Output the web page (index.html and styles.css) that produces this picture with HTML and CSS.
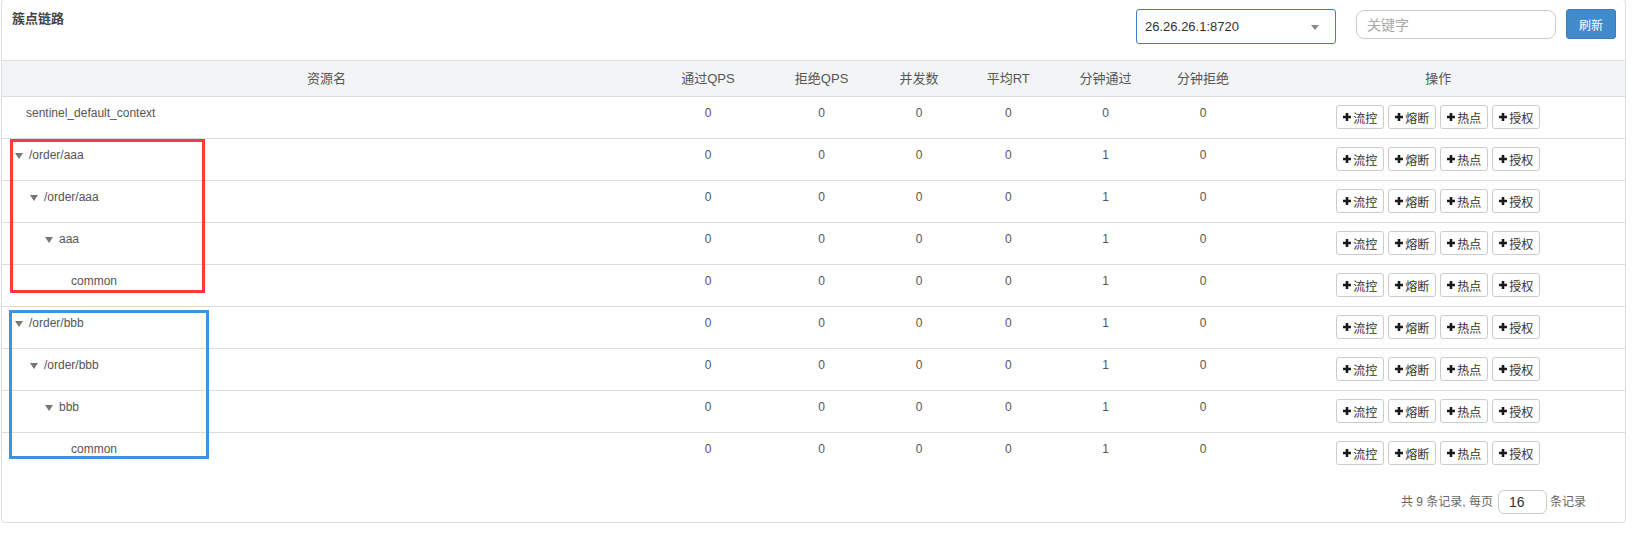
FILE: index.html
```html
<!DOCTYPE html>
<html lang="zh-CN">
<head>
<meta charset="utf-8">
<title>簇点链路</title>
<link rel="stylesheet" href="styles.css">
</head>
<body>
<div class="panel">
  <div class="heading">
    <div class="title">簇点链路</div>
    <div class="tools">
      <div class="select"><span>26.26.26.1:8720</span><i class="caret"></i></div>
      <input class="search" type="text" placeholder="关键字">
      <button class="btn-primary" type="button">刷新</button>
    </div>
  </div>

  <div class="table">
    <div class="row head">
      <div class="c">资源名</div><div class="c">通过QPS</div><div class="c">拒绝QPS</div><div class="c">并发数</div><div class="c">平均RT</div><div class="c">分钟通过</div><div class="c">分钟拒绝</div><div class="c">操作</div>
    </div>

    <div class="row">
      <div class="c name lv0"><span class="leaf">sentinel_default_context</span></div>
      <div class="c">0</div><div class="c">0</div><div class="c">0</div><div class="c">0</div><div class="c">0</div><div class="c">0</div>
      <div class="c ops"><button class="btn"><svg viewBox="0 0 10 10"><path d="M3.4 0h3.2v3.4H10v3.2H6.6V10H3.4V6.6H0V3.4h3.4z"/></svg>流控</button><button class="btn"><svg viewBox="0 0 10 10"><path d="M3.4 0h3.2v3.4H10v3.2H6.6V10H3.4V6.6H0V3.4h3.4z"/></svg>熔断</button><button class="btn"><svg viewBox="0 0 10 10"><path d="M3.4 0h3.2v3.4H10v3.2H6.6V10H3.4V6.6H0V3.4h3.4z"/></svg>热点</button><button class="btn"><svg viewBox="0 0 10 10"><path d="M3.4 0h3.2v3.4H10v3.2H6.6V10H3.4V6.6H0V3.4h3.4z"/></svg>授权</button></div>
    </div>

    <div class="row">
      <div class="c name lv0"><i class="tri"></i>/order/aaa</div>
      <div class="c">0</div><div class="c">0</div><div class="c">0</div><div class="c">0</div><div class="c">1</div><div class="c">0</div>
      <div class="c ops"><button class="btn"><svg viewBox="0 0 10 10"><path d="M3.4 0h3.2v3.4H10v3.2H6.6V10H3.4V6.6H0V3.4h3.4z"/></svg>流控</button><button class="btn"><svg viewBox="0 0 10 10"><path d="M3.4 0h3.2v3.4H10v3.2H6.6V10H3.4V6.6H0V3.4h3.4z"/></svg>熔断</button><button class="btn"><svg viewBox="0 0 10 10"><path d="M3.4 0h3.2v3.4H10v3.2H6.6V10H3.4V6.6H0V3.4h3.4z"/></svg>热点</button><button class="btn"><svg viewBox="0 0 10 10"><path d="M3.4 0h3.2v3.4H10v3.2H6.6V10H3.4V6.6H0V3.4h3.4z"/></svg>授权</button></div>
    </div>

    <div class="row">
      <div class="c name lv1"><i class="tri"></i>/order/aaa</div>
      <div class="c">0</div><div class="c">0</div><div class="c">0</div><div class="c">0</div><div class="c">1</div><div class="c">0</div>
      <div class="c ops"><button class="btn"><svg viewBox="0 0 10 10"><path d="M3.4 0h3.2v3.4H10v3.2H6.6V10H3.4V6.6H0V3.4h3.4z"/></svg>流控</button><button class="btn"><svg viewBox="0 0 10 10"><path d="M3.4 0h3.2v3.4H10v3.2H6.6V10H3.4V6.6H0V3.4h3.4z"/></svg>熔断</button><button class="btn"><svg viewBox="0 0 10 10"><path d="M3.4 0h3.2v3.4H10v3.2H6.6V10H3.4V6.6H0V3.4h3.4z"/></svg>热点</button><button class="btn"><svg viewBox="0 0 10 10"><path d="M3.4 0h3.2v3.4H10v3.2H6.6V10H3.4V6.6H0V3.4h3.4z"/></svg>授权</button></div>
    </div>

    <div class="row">
      <div class="c name lv2"><i class="tri"></i>aaa</div>
      <div class="c">0</div><div class="c">0</div><div class="c">0</div><div class="c">0</div><div class="c">1</div><div class="c">0</div>
      <div class="c ops"><button class="btn"><svg viewBox="0 0 10 10"><path d="M3.4 0h3.2v3.4H10v3.2H6.6V10H3.4V6.6H0V3.4h3.4z"/></svg>流控</button><button class="btn"><svg viewBox="0 0 10 10"><path d="M3.4 0h3.2v3.4H10v3.2H6.6V10H3.4V6.6H0V3.4h3.4z"/></svg>熔断</button><button class="btn"><svg viewBox="0 0 10 10"><path d="M3.4 0h3.2v3.4H10v3.2H6.6V10H3.4V6.6H0V3.4h3.4z"/></svg>热点</button><button class="btn"><svg viewBox="0 0 10 10"><path d="M3.4 0h3.2v3.4H10v3.2H6.6V10H3.4V6.6H0V3.4h3.4z"/></svg>授权</button></div>
    </div>

    <div class="row">
      <div class="c name lv3"><span class="leaf">common</span></div>
      <div class="c">0</div><div class="c">0</div><div class="c">0</div><div class="c">0</div><div class="c">1</div><div class="c">0</div>
      <div class="c ops"><button class="btn"><svg viewBox="0 0 10 10"><path d="M3.4 0h3.2v3.4H10v3.2H6.6V10H3.4V6.6H0V3.4h3.4z"/></svg>流控</button><button class="btn"><svg viewBox="0 0 10 10"><path d="M3.4 0h3.2v3.4H10v3.2H6.6V10H3.4V6.6H0V3.4h3.4z"/></svg>熔断</button><button class="btn"><svg viewBox="0 0 10 10"><path d="M3.4 0h3.2v3.4H10v3.2H6.6V10H3.4V6.6H0V3.4h3.4z"/></svg>热点</button><button class="btn"><svg viewBox="0 0 10 10"><path d="M3.4 0h3.2v3.4H10v3.2H6.6V10H3.4V6.6H0V3.4h3.4z"/></svg>授权</button></div>
    </div>

    <div class="row">
      <div class="c name lv0"><i class="tri"></i>/order/bbb</div>
      <div class="c">0</div><div class="c">0</div><div class="c">0</div><div class="c">0</div><div class="c">1</div><div class="c">0</div>
      <div class="c ops"><button class="btn"><svg viewBox="0 0 10 10"><path d="M3.4 0h3.2v3.4H10v3.2H6.6V10H3.4V6.6H0V3.4h3.4z"/></svg>流控</button><button class="btn"><svg viewBox="0 0 10 10"><path d="M3.4 0h3.2v3.4H10v3.2H6.6V10H3.4V6.6H0V3.4h3.4z"/></svg>熔断</button><button class="btn"><svg viewBox="0 0 10 10"><path d="M3.4 0h3.2v3.4H10v3.2H6.6V10H3.4V6.6H0V3.4h3.4z"/></svg>热点</button><button class="btn"><svg viewBox="0 0 10 10"><path d="M3.4 0h3.2v3.4H10v3.2H6.6V10H3.4V6.6H0V3.4h3.4z"/></svg>授权</button></div>
    </div>

    <div class="row">
      <div class="c name lv1"><i class="tri"></i>/order/bbb</div>
      <div class="c">0</div><div class="c">0</div><div class="c">0</div><div class="c">0</div><div class="c">1</div><div class="c">0</div>
      <div class="c ops"><button class="btn"><svg viewBox="0 0 10 10"><path d="M3.4 0h3.2v3.4H10v3.2H6.6V10H3.4V6.6H0V3.4h3.4z"/></svg>流控</button><button class="btn"><svg viewBox="0 0 10 10"><path d="M3.4 0h3.2v3.4H10v3.2H6.6V10H3.4V6.6H0V3.4h3.4z"/></svg>熔断</button><button class="btn"><svg viewBox="0 0 10 10"><path d="M3.4 0h3.2v3.4H10v3.2H6.6V10H3.4V6.6H0V3.4h3.4z"/></svg>热点</button><button class="btn"><svg viewBox="0 0 10 10"><path d="M3.4 0h3.2v3.4H10v3.2H6.6V10H3.4V6.6H0V3.4h3.4z"/></svg>授权</button></div>
    </div>

    <div class="row">
      <div class="c name lv2"><i class="tri"></i>bbb</div>
      <div class="c">0</div><div class="c">0</div><div class="c">0</div><div class="c">0</div><div class="c">1</div><div class="c">0</div>
      <div class="c ops"><button class="btn"><svg viewBox="0 0 10 10"><path d="M3.4 0h3.2v3.4H10v3.2H6.6V10H3.4V6.6H0V3.4h3.4z"/></svg>流控</button><button class="btn"><svg viewBox="0 0 10 10"><path d="M3.4 0h3.2v3.4H10v3.2H6.6V10H3.4V6.6H0V3.4h3.4z"/></svg>熔断</button><button class="btn"><svg viewBox="0 0 10 10"><path d="M3.4 0h3.2v3.4H10v3.2H6.6V10H3.4V6.6H0V3.4h3.4z"/></svg>热点</button><button class="btn"><svg viewBox="0 0 10 10"><path d="M3.4 0h3.2v3.4H10v3.2H6.6V10H3.4V6.6H0V3.4h3.4z"/></svg>授权</button></div>
    </div>

    <div class="row">
      <div class="c name lv3"><span class="leaf">common</span></div>
      <div class="c">0</div><div class="c">0</div><div class="c">0</div><div class="c">0</div><div class="c">1</div><div class="c">0</div>
      <div class="c ops"><button class="btn"><svg viewBox="0 0 10 10"><path d="M3.4 0h3.2v3.4H10v3.2H6.6V10H3.4V6.6H0V3.4h3.4z"/></svg>流控</button><button class="btn"><svg viewBox="0 0 10 10"><path d="M3.4 0h3.2v3.4H10v3.2H6.6V10H3.4V6.6H0V3.4h3.4z"/></svg>熔断</button><button class="btn"><svg viewBox="0 0 10 10"><path d="M3.4 0h3.2v3.4H10v3.2H6.6V10H3.4V6.6H0V3.4h3.4z"/></svg>热点</button><button class="btn"><svg viewBox="0 0 10 10"><path d="M3.4 0h3.2v3.4H10v3.2H6.6V10H3.4V6.6H0V3.4h3.4z"/></svg>授权</button></div>
    </div>
  </div>

  <div class="footer">
    <span class="ftext">共 9 条记录, 每页</span>
    <input class="page-size" type="text" value="16">
    <span class="ftext">条记录</span>
  </div>
</div>

<div class="mark mark-red"></div>
<div class="mark mark-blue"></div>
</body>
</html>
```

FILE: styles.css
```css
* { box-sizing: border-box; }

html, body {
  margin: 0;
  padding: 0;
  background: #fff;
}

body {
  font-family: "Liberation Sans", "Noto Sans CJK SC", sans-serif;
  font-size: 12px;
  color: #555;
  position: relative;
  height: 536px;
  overflow: hidden;
}

.panel {
  margin: -1px 0 0 1px;
  width: 1625px;
  border: 1px solid #ddd;
  border-radius: 4px;
  background: #fff;
}

.heading {
  height: 60px;
  display: flex;
  justify-content: space-between;
  align-items: flex-start;
  padding: 9px 9px 0 10px;
}

.title {
  font-size: 13px;
  font-weight: bold;
  color: #444;
  line-height: 18px;
  margin-top: 1px;
}

.tools {
  display: flex;
  align-items: flex-start;
}

.select {
  width: 200px;
  height: 35px;
  border: 1px solid #3a7fc1;
  border-radius: 3px;
  display: flex;
  align-items: center;
  justify-content: space-between;
  padding: 0 16px 0 8px;
  font-size: 13px;
  color: #333;
  margin-right: 20px;
}

.caret {
  width: 0;
  height: 0;
  border-left: 4px solid transparent;
  border-right: 4px solid transparent;
  border-top: 5px solid #888;
  margin-top: 1px;
}

.search {
  width: 200px;
  height: 29px;
  margin: 1px 10px 0 0;
  border: 1px solid #ccc;
  border-radius: 8px;
  padding: 0 10px;
  font-family: "Liberation Sans", "Noto Sans CJK SC", sans-serif;
  font-size: 14px;
  color: #333;
  outline: none;
}

.search::placeholder {
  color: #aaa;
}

.btn-primary {
  width: 50px;
  height: 30px;
  background: #428bca;
  border: 1px solid #3a80bf;
  border-radius: 3px;
  color: #fff;
  font-family: "Liberation Sans", "Noto Sans CJK SC", sans-serif;
  font-size: 12px;
  padding: 0;
}

.table {
  width: 100%;
}

.row {
  display: grid;
  grid-template-columns: 40% 7% 7% 5% 6% 6% 6% 23%;
  border-top: 1px solid #ddd;
  height: 42px;
}

.row.head {
  height: 36px;
  background: #f3f4f6;
  align-items: center;
  font-size: 13px;
  color: #555;
}

.c {
  text-align: center;
  padding-top: 8px;
  line-height: 16px;
  white-space: nowrap;
}

.head .c {
  padding-top: 0;
}

.name {
  text-align: left;
  display: flex;
  align-items: center;
  align-self: start;
  height: 32px;
  padding-bottom: 8px;
  padding-left: 13px;
}

.lv1 { padding-left: 28px; }
.lv2 { padding-left: 43px; }
.lv3 { padding-left: 58px; }

.leaf {
  margin-left: 11px;
}

.tri {
  width: 0;
  height: 0;
  border-left: 4px solid transparent;
  border-right: 4px solid transparent;
  border-top: 6px solid #777;
  margin: 2px 6px 0 0;
}

.ops {
  display: flex;
  justify-content: center;
  gap: 4px;
  align-items: flex-start;
}

.btn {
  height: 24px;
  width: 48px;
  display: inline-flex;
  align-items: center;
  justify-content: center;
  gap: 2px;
  padding: 0;
  background: #fff;
  border: 1px solid #ccc;
  border-radius: 3px;
  font-family: "Liberation Sans", "Noto Sans CJK SC", sans-serif;
  font-size: 12px;
  color: #333;
}

.btn svg {
  width: 8px;
  height: 8px;
  fill: #1a1a1a;
  flex: none;
}

.footer {
  height: 48px;
  display: flex;
  justify-content: flex-end;
  align-items: flex-start;
  padding: 16px 39px 0 0;
  color: #666;
  font-size: 12px;
}

.ftext {
  line-height: 24px;
}

.page-size {
  width: 49px;
  height: 24px;
  margin: 0 3px 0 5px;
  border: 1px solid #ccc;
  border-radius: 6px;
  padding: 0 0 0 10px;
  font-family: "Liberation Sans", "Noto Sans CJK SC", sans-serif;
  font-size: 14px;
  color: #333;
  outline: none;
}

.mark {
  position: absolute;
  border-style: solid;
  border-width: 3px;
  pointer-events: none;
}

.mark-red {
  left: 10px;
  top: 139px;
  width: 195px;
  height: 154px;
  border-color: #fe3a3a;
}

.mark-blue {
  left: 9px;
  top: 310px;
  width: 200px;
  height: 149px;
  border-color: #3a94e3;
}
```
